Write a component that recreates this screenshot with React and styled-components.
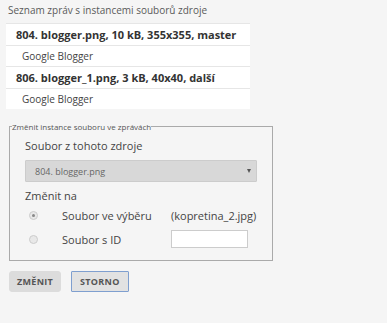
import styled, { createGlobalStyle } from 'styled-components';

const Global = createGlobalStyle`
  html, body {
    margin: 0;
    background: #f5f5f5;
    font-family: "Open Sans", "DejaVu Sans", sans-serif;
    color: #333;
  }
`;

const Page = styled.div`
  padding: 4px 6px 0 6px;
  width: 387px;
  box-sizing: border-box;
`;

const Caption = styled.div`
  font-size: 10px;
  color: #5a5a5a;
  padding-left: 2px;
  line-height: 13px;
  margin-bottom: 6px;
`;

const List = styled.div`
  width: 244px;
  display: flex;
  flex-direction: column;
  gap: 1px;
  background: #e6e6e6;
  border-top: 1px solid #e6e6e6;
`;

const Row = styled.div`
  background: #fff;
  height: ${p => (p.$head ? 21 : 20)}px;
  display: flex;
  align-items: center;
  padding-left: ${p => (p.$head ? 10 : 16)}px;
  font-size: ${p => (p.$head ? 11 : 10)}px;
  font-weight: ${p => (p.$head ? 700 : 400)};
  color: ${p => (p.$head ? '#333' : '#444')};
`;

const Fieldset = styled.fieldset`
  margin: 12px 0 0 3px;
  width: 264px;
  box-sizing: border-box;
  border: 1px solid #aaa;
  padding: 6px 15px 9px 15px;
`;

const Legend = styled.legend`
  font-size: 8px;
  color: #555;
  padding: 0;
  margin-left: -13px;
`;

const Label = styled.div`
  font-size: 11px;
  color: #444;
  line-height: 15px;
  margin: ${p => p.$m || '0'};
`;

const Select = styled.div`
  height: 22px;
  width: 232px;
  box-sizing: border-box;
  background: #d8d8d8;
  border: 1px solid #ccc;
  border-radius: 1px;
  display: flex;
  align-items: center;
  justify-content: space-between;
  padding: 0 5px 0 9px;
  font-size: 9px;
  color: #666;
  margin-top: 7px;
`;

const Arrow = styled.span`
  width: 0;
  height: 0;
  border-left: 2.5px solid transparent;
  border-right: 2.5px solid transparent;
  border-top: 4px solid #555;
`;

const OptionRow = styled.div`
  display: grid;
  grid-template-columns: 37px 109px 1fr;
  align-items: center;
  height: 24px;
  font-size: 11px;
  color: #444;
`;

const Radio = styled.span`
  width: 7px;
  height: 7px;
  border-radius: 50%;
  background: #e8e8e8;
  border: 1px solid #ccc;
  margin-left: 4px;
  display: flex;
  align-items: center;
  justify-content: center;
  &::after {
    content: '';
    width: 3px;
    height: 3px;
    border-radius: 50%;
    background: ${p => (p.$on ? '#888' : 'transparent')};
  }
`;

const TextInput = styled.div`
  width: 77px;
  height: 18px;
  box-sizing: border-box;
  background: #fff;
  border: 1px solid #ccc;
`;

const Buttons = styled.div`
  display: flex;
  gap: 10px;
  margin: 10px 0 0 3px;
`;

const Button = styled.button`
  font-family: inherit;
  font-size: 9px;
  font-weight: 700;
  letter-spacing: 0.3px;
  color: #555;
  background: ${p => (p.$focus ? '#e2e2e2' : '#dcdcdc')};
  border: 1px solid ${p => (p.$focus ? '#7f9fcf' : '#dcdcdc')};
  border-radius: ${p => (p.$focus ? '1px' : '3px')};
  height: 21px;
  padding: 0 ${p => (p.$focus ? 8 : 7)}px;
`;

export default function App() {
  return (
    <Page>
      <Global />
      <Caption>Seznam zpráv s instancemi souborů zdroje</Caption>
      <List>
        <Row $head>804. blogger.png, 10 kB, 355x355, master</Row>
        <Row>Google Blogger</Row>
        <Row $head>806. blogger_1.png, 3 kB, 40x40, další</Row>
        <Row>Google Blogger</Row>
      </List>
      <Fieldset>
        <Legend>Změnit instance souboru ve zprávách</Legend>
        <Label>Soubor z tohoto zdroje</Label>
        <Select>
          <span>804. blogger.png</span>
          <Arrow />
        </Select>
        <Label $m="6px 0 0 0">Změnit na</Label>
        <OptionRow>
          <Radio $on />
          <span>Soubor ve výběru</span>
          <span>(kopretina_2.jpg)</span>
        </OptionRow>
        <OptionRow>
          <Radio />
          <span>Soubor s ID</span>
          <TextInput />
        </OptionRow>
      </Fieldset>
      <Buttons>
        <Button>ZMĚNIT</Button>
        <Button $focus>STORNO</Button>
      </Buttons>
    </Page>
  );
}
